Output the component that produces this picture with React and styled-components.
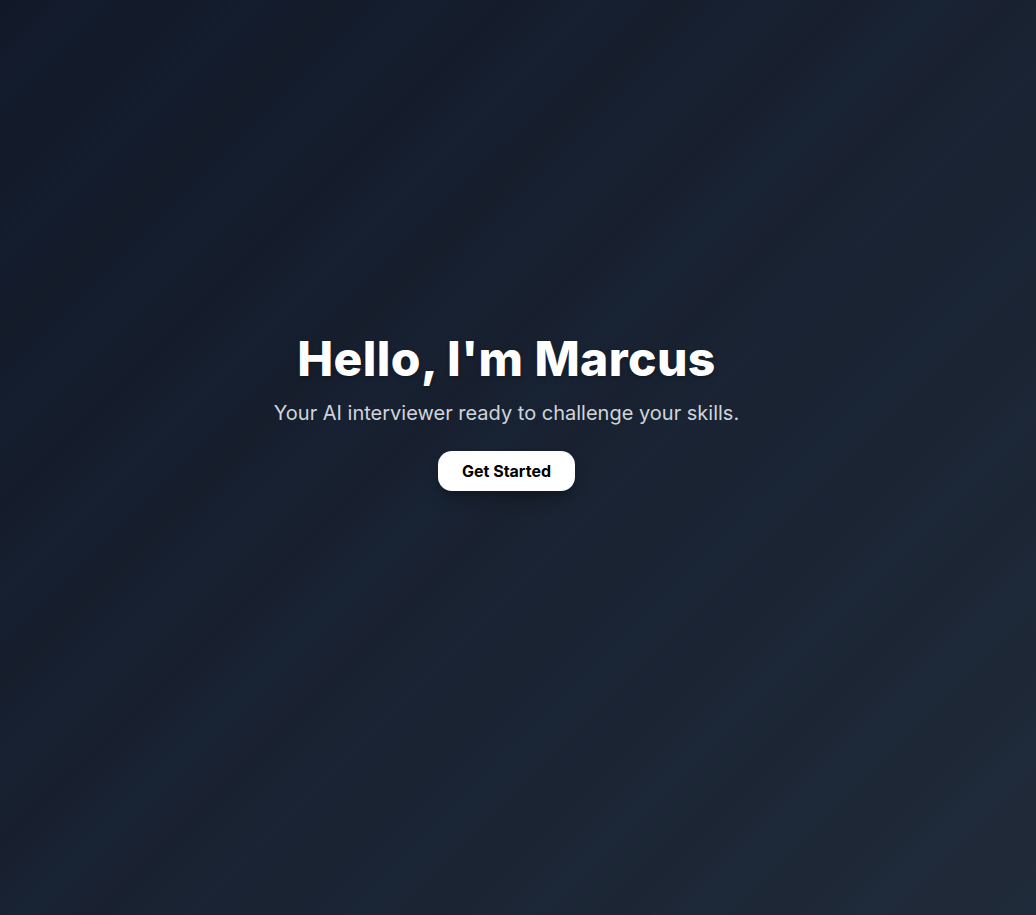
import styled, { createGlobalStyle } from "styled-components"

const GlobalStyle = createGlobalStyle`
    html, body {
        margin: 0;
        padding: 0;
    }
    body {
        font-family: Inter, "Noto Sans", sans-serif;
    }
`

const Page = styled.main`
    min-height: 100vh;
    box-sizing: border-box;
    padding: 0 23px 90px 0;
    display: flex;
    align-items: center;
    justify-content: center;
    background:
        repeating-linear-gradient(
            135deg,
            rgba(255, 255, 255, 0) 0px,
            rgba(59, 130, 246, 0.025) 60px,
            rgba(255, 255, 255, 0) 120px
        ),
        linear-gradient(135deg, #111827 0%, #1f2937 100%);
`

const Hero = styled.section`
    display: flex;
    flex-direction: column;
    align-items: center;
    text-align: center;
`

const Title = styled.h1`
    margin: 0 0 16px;
    font-size: 48px;
    line-height: 1;
    font-weight: 800;
    letter-spacing: 0.4px;
    color: #ffffff;
    text-shadow: 0 2px 4px rgba(0, 0, 0, 0.25);
`

const Subtitle = styled.p`
    margin: 0 0 24px;
    font-size: 20px;
    line-height: 28px;
    color: #d1d5db;
`

const StartButton = styled.button`
    height: 40px;
    padding: 0 24px;
    border: none;
    border-radius: 14px;
    background: #ffffff;
    color: #000000;
    font-family: inherit;
    font-size: 16px;
    font-weight: 700;
    cursor: pointer;
    box-shadow: 0 10px 15px -3px rgba(0, 0, 0, 0.25), 0 4px 6px -4px rgba(0, 0, 0, 0.2);
`

const App = () => {
    return (
        <>
            <GlobalStyle />
            <Page>
                <Hero>
                    <Title>Hello, I'm Marcus</Title>
                    <Subtitle>Your AI interviewer ready to challenge your skills.</Subtitle>
                    <StartButton>Get Started</StartButton>
                </Hero>
            </Page>
        </>
    )
}

export default App
